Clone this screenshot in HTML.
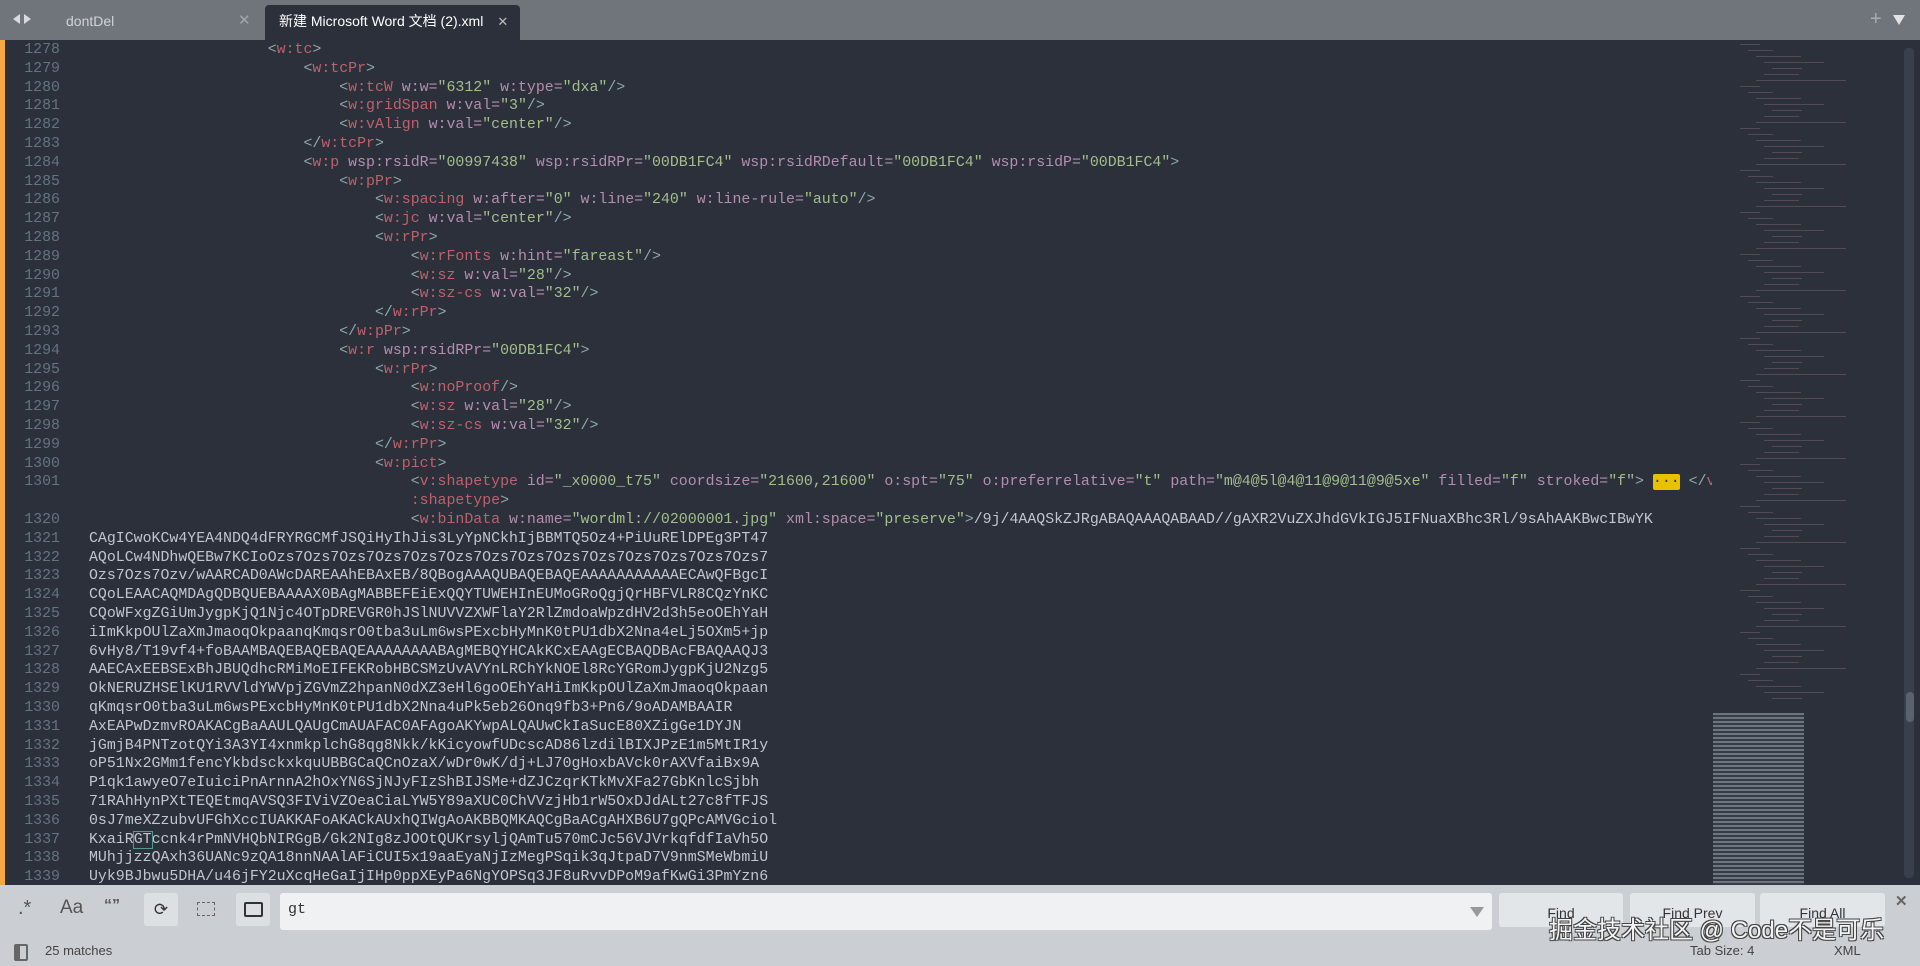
<!DOCTYPE html>
<html><head><meta charset="utf-8"><style>
*{margin:0;padding:0;box-sizing:border-box}
body{width:1920px;height:966px;overflow:hidden;background:#2b303b;font-family:"Liberation Sans","Noto Sans CJK SC",sans-serif;position:relative}
#tabs{position:absolute;left:0;top:0;width:1920px;height:40px;background:#70757b}
.tab{position:absolute;top:5px;height:35px;font-size:14px;line-height:32px}
#code{position:absolute;left:0;top:41px;width:1712px;height:844px;overflow:hidden}
.ln{position:absolute;left:0;width:60px;text-align:right;color:#65737e;font:14.9px/18.8px "Liberation Mono",monospace}
.tx{position:absolute;left:89px;white-space:pre;color:#c0c5ce;font:14.9px/18.8px "Liberation Mono",monospace}
.p{color:#8fa8a8}.t{color:#bf616a}.a{color:#b48ead}.s{color:#a3be8c}
#bar{position:absolute;left:0;top:40px;width:5px;height:845px;background:#f5a742}
#panel{position:absolute;left:0;top:885px;width:1920px;height:81px;background:#cbcfd4}
.btn{position:absolute;top:8px;height:34px;background:#e3e6e9;border-radius:3px;font-size:14px;color:#333;text-align:center;line-height:40px}
.mm{position:absolute;height:1px;background:#8a6a72;opacity:.45}
</style></head><body>
<div id="tabs">
<div style="position:absolute;left:13px;top:14px;width:0;height:0;border-top:5px solid transparent;border-bottom:5px solid transparent;border-right:7px solid #d8dadc"></div>
<div style="position:absolute;left:24px;top:14px;width:0;height:0;border-top:5px solid transparent;border-bottom:5px solid transparent;border-left:7px solid #d8dadc"></div>
<div class="tab" style="left:66px;color:#d0d3d6">dontDel</div>
<div class="tab" style="left:238px;color:#a3a7ab;font-size:15px">✕</div>
<div class="tab" style="left:265px;width:255px;background:#2b303b;border-radius:4px 4px 0 0;color:#fff;padding-left:14px">新建 Microsoft Word 文档 (2).xml<span style="margin-left:14px;color:#bbb;font-size:13px">✕</span></div>
<div style="position:absolute;left:1870px;top:8px;color:#a9adb2;font-size:20px">+</div>
<div style="position:absolute;left:1893px;top:15px;width:0;height:0;border-left:6px solid transparent;border-right:6px solid transparent;border-top:10px solid #e0e2e4"></div>
</div>
<div id="bar"></div>
<div id="code"><div id="lines"></div></div>
<div id="mini"></div>
<div style="position:absolute;left:1713px;top:713px;width:91px;height:172px;background:repeating-linear-gradient(#8b9299 0 2px,#3a404b 2px 4px);opacity:.7"></div>
<div style="position:absolute;left:1904px;top:48px;width:10px;height:830px;background:#39404b;border-radius:4px"></div>
<div style="position:absolute;left:1906px;top:692px;width:8px;height:30px;background:#5a626d;border-radius:4px"></div>
<div id="panel">
<div style="position:absolute;left:18px;top:12px;font-size:20px;color:#555">.*</div>
<div style="position:absolute;left:60px;top:12px;font-size:19px;color:#555">Aa</div>
<div style="position:absolute;left:104px;top:12px;font-size:16px;color:#555;font-weight:bold">“”</div>
<div style="position:absolute;left:144px;top:8px;width:34px;height:33px;background:#dde0e3;border-radius:3px;font-size:17px;color:#333;text-align:center;line-height:33px">⟳</div>
<div style="position:absolute;left:197px;top:17px;width:18px;height:14px;border:1px dashed #666"></div>
<div style="position:absolute;left:236px;top:8px;width:34px;height:33px;background:#dde0e3;border-radius:3px"><div style="position:absolute;left:8px;top:9px;width:19px;height:15px;border:2px solid #333;border-radius:2px"></div></div>
<div style="position:absolute;left:280px;top:8px;width:1212px;height:37px;background:#eff1f3;border-radius:3px;font:15px/34px 'Liberation Mono',monospace;color:#333;padding-left:8px">gt</div>
<div style="position:absolute;left:1470px;top:22px;width:0;height:0;border-left:7px solid transparent;border-right:7px solid transparent;border-top:10px solid #999"></div>
<div class="btn" style="left:1499px;width:124px">Find</div>
<div class="btn" style="left:1630px;width:125px">Find Prev</div>
<div class="btn" style="left:1760px;width:125px">Find All</div>
<div style="position:absolute;left:1895px;top:7px;font-size:15px;color:#666;font-weight:bold">✕</div>
<div style="position:absolute;left:14px;top:59px;width:14px;height:17px;border:2px solid #666;border-left-width:6px;border-radius:2px"></div>
<div style="position:absolute;left:45px;top:58px;font-size:13px;color:#444">25 matches</div>
<div style="position:absolute;left:1690px;top:58px;font-size:13px;color:#444">Tab Size: 4</div>
<div style="position:absolute;left:1834px;top:58px;font-size:13px;color:#444">XML</div>
<div style="position:absolute;left:1549px;top:25px;font-size:24px;color:#f4f4f4;text-shadow:-1px -1px 0 #444,1px 1px 0 #444,1px -1px 0 #444,-1px 1px 0 #444;white-space:nowrap">掘金技术社区 @ Code不是可乐</div>
</div>
<script>
var rows=[
[1278,20,'<span class=p>&lt;</span><span class=t>w:tc</span><span class=p>&gt;</span>'],
[1279,24,'<span class=p>&lt;</span><span class=t>w:tcPr</span><span class=p>&gt;</span>'],
[1280,28,'<span class=p>&lt;</span><span class=t>w:tcW</span> <span class=a>w:w=</span><span class=s>"6312"</span> <span class=a>w:type=</span><span class=s>"dxa"</span><span class=p>/&gt;</span>'],
[1281,28,'<span class=p>&lt;</span><span class=t>w:gridSpan</span> <span class=a>w:val=</span><span class=s>"3"</span><span class=p>/&gt;</span>'],
[1282,28,'<span class=p>&lt;</span><span class=t>w:vAlign</span> <span class=a>w:val=</span><span class=s>"center"</span><span class=p>/&gt;</span>'],
[1283,24,'<span class=p>&lt;/</span><span class=t>w:tcPr</span><span class=p>&gt;</span>'],
[1284,24,'<span class=p>&lt;</span><span class=t>w:p</span> <span class=a>wsp:rsidR=</span><span class=s>"00997438"</span> <span class=a>wsp:rsidRPr=</span><span class=s>"00DB1FC4"</span> <span class=a>wsp:rsidRDefault=</span><span class=s>"00DB1FC4"</span> <span class=a>wsp:rsidP=</span><span class=s>"00DB1FC4"</span><span class=p>&gt;</span>'],
[1285,28,'<span class=p>&lt;</span><span class=t>w:pPr</span><span class=p>&gt;</span>'],
[1286,32,'<span class=p>&lt;</span><span class=t>w:spacing</span> <span class=a>w:after=</span><span class=s>"0"</span> <span class=a>w:line=</span><span class=s>"240"</span> <span class=a>w:line-rule=</span><span class=s>"auto"</span><span class=p>/&gt;</span>'],
[1287,32,'<span class=p>&lt;</span><span class=t>w:jc</span> <span class=a>w:val=</span><span class=s>"center"</span><span class=p>/&gt;</span>'],
[1288,32,'<span class=p>&lt;</span><span class=t>w:rPr</span><span class=p>&gt;</span>'],
[1289,36,'<span class=p>&lt;</span><span class=t>w:rFonts</span> <span class=a>w:hint=</span><span class=s>"fareast"</span><span class=p>/&gt;</span>'],
[1290,36,'<span class=p>&lt;</span><span class=t>w:sz</span> <span class=a>w:val=</span><span class=s>"28"</span><span class=p>/&gt;</span>'],
[1291,36,'<span class=p>&lt;</span><span class=t>w:sz-cs</span> <span class=a>w:val=</span><span class=s>"32"</span><span class=p>/&gt;</span>'],
[1292,32,'<span class=p>&lt;/</span><span class=t>w:rPr</span><span class=p>&gt;</span>'],
[1293,28,'<span class=p>&lt;/</span><span class=t>w:pPr</span><span class=p>&gt;</span>'],
[1294,28,'<span class=p>&lt;</span><span class=t>w:r</span> <span class=a>wsp:rsidRPr=</span><span class=s>"00DB1FC4"</span><span class=p>&gt;</span>'],
[1295,32,'<span class=p>&lt;</span><span class=t>w:rPr</span><span class=p>&gt;</span>'],
[1296,36,'<span class=p>&lt;</span><span class=t>w:noProof</span><span class=p>/&gt;</span>'],
[1297,36,'<span class=p>&lt;</span><span class=t>w:sz</span> <span class=a>w:val=</span><span class=s>"28"</span><span class=p>/&gt;</span>'],
[1298,36,'<span class=p>&lt;</span><span class=t>w:sz-cs</span> <span class=a>w:val=</span><span class=s>"32"</span><span class=p>/&gt;</span>'],
[1299,32,'<span class=p>&lt;/</span><span class=t>w:rPr</span><span class=p>&gt;</span>'],
[1300,32,'<span class=p>&lt;</span><span class=t>w:pict</span><span class=p>&gt;</span>'],
[1301,36,'<span class=p>&lt;</span><span class=t>v:shapetype</span> <span class=a>id=</span><span class=s>"_x0000_t75"</span> <span class=a>coordsize=</span><span class=s>"21600,21600"</span> <span class=a>o:spt=</span><span class=s>"75"</span> <span class=a>o:preferrelative=</span><span class=s>"t"</span> <span class=a>path=</span><span class=s>"m@4@5l@4@11@9@11@9@5xe"</span> <span class=a>filled=</span><span class=s>"f"</span> <span class=a>stroked=</span><span class=s>"f"</span><span class=p>&gt;</span> <span style="background:#e8c100;color:#333;border-radius:2px">···</span> <span class=p>&lt;/</span><span class=t>v</span>'],
['',36,'<span class=t>:shapetype</span><span class=p>&gt;</span>'],
[1320,36,'<span class=p>&lt;</span><span class=t>w:binData</span> <span class=a>w:name=</span><span class=s>"wordml://02000001.jpg"</span> <span class=a>xml:space=</span><span class=s>"preserve"</span><span class=p>&gt;</span>/9j/4AAQSkZJRgABAQAAAQABAAD//gAXR2VuZXJhdGVkIGJ5IFNuaXBhc3Rl/9sAhAAKBwcIBwYK']
];
var b64=["CAgICwoKCw4YEA4NDQ4dFRYRGCMfJSQiHyIhJis3LyYpNCkhIjBBMTQ5Oz4+PiUuRElDPEg3PT47",
"AQoLCw4NDhwQEBw7KCIoOzs7Ozs7Ozs7Ozs7Ozs7Ozs7Ozs7Ozs7Ozs7Ozs7Ozs7Ozs7Ozs7Ozs7",
"Ozs7Ozs7Ozv/wAARCAD0AWcDAREAAhEBAxEB/8QBogAAAQUBAQEBAQEAAAAAAAAAAAECAwQFBgcI",
"CQoLEAACAQMDAgQDBQUEBAAAAX0BAgMABBEFEiExQQYTUWEHInEUMoGRoQgjQrHBFVLR8CQzYnKC",
"CQoWFxgZGiUmJygpKjQ1Njc4OTpDREVGR0hJSlNUVVZXWFlaY2RlZmdoaWpzdHV2d3h5eoOEhYaH",
"iImKkpOUlZaXmJmaoqOkpaanqKmqsrO0tba3uLm6wsPExcbHyMnK0tPU1dbX2Nna4eLj5OXm5+jp",
"6vHy8/T19vf4+foBAAMBAQEBAQEBAQEAAAAAAAABAgMEBQYHCAkKCxEAAgECBAQDBAcFBAQAAQJ3",
"AAECAxEEBSExBhJBUQdhcRMiMoEIFEKRobHBCSMzUvAVYnLRChYkNOEl8RcYGRomJygpKjU2Nzg5",
"OkNERUZHSElKU1RVVldYWVpjZGVmZ2hpanN0dXZ3eHl6goOEhYaHiImKkpOUlZaXmJmaoqOkpaan",
"qKmqsrO0tba3uLm6wsPExcbHyMnK0tPU1dbX2Nna4uPk5eb26Onq9fb3+Pn6/9oADAMBAAIR",
"AxEAPwDzmvROAKACgBaAAULQAUgCmAUAFAC0AFAgoAKYwpALQAUwCkIaSucE80XZigGe1DYJN",
"jGmjB4PNTzotQYi3A3YI4xnmkplchG8qg8Nkk/kKicyowfUDcscAD86lzdilBIXJPzE1m5MtIR1y",
"oP51Nx2GMm1fencYkbdsckxkquUBBGCaQCnOzaX/wDr0wK/dj+LJ70gHoxbAVck0rAXVfaiBx9A",
"P1qk1awyeO7eIuiciPnArnnA2hOxYN6SjNJyFIzShBIJSMe+dZJCzqrKTkMvXFa27GbKnlcSjbh",
"71RAhHynPXtTEQEtmqAVSQ3FIViVZOeaCiaLYW5Y89aXUC0ChVVzjHb1rW5OxDJdALt27c8fTFJS",
"0sJ7meXZzubvUFGhXccIUAKKAFoAKACkAUxhQIWgAoAKBBQMKAQCgBaACgAHXB6U7gQPcAMVGciol",
"KxaiRGTccnk4rPmNVHQbNIRGgB/Gk2NIg8zJOOtQUKrsyljQAmTu570mCJc56VJVrkqfdfIaVh5O",
"MUhjjzzQAxh36UANc9zQA18nnNAAlAFiCUI5x19aaEyaNjIzMegPSqik3qJtpaD7V9nmSMeWbmiU",
"Uyk9BJbwu5DHA/u46jFY2uXcqHeGaIjIHp0ppXEyPa6NgYOPSq3JF8uRvvDPoM9afKwGi3PmYzn6"];
var h='',y=0,ln='',L=18.8;
rows.forEach(function(r){
 ln+='<div class=ln style="top:'+y+'px">'+r[0]+'</div>';
 h+='<div class=tx style="top:'+y+'px">'+' '.repeat(r[1])+r[2]+'</div>';y+=L;});
b64.forEach(function(s,i){
 ln+='<div class=ln style="top:'+y+'px">'+(1321+i)+'</div>';
 if(i==16) s='<span>KxaiR</span><span style="outline:1px solid #4f9a94">GT</span>'+s.slice(7);
 h+='<div class=tx style="top:'+y+'px">'+s+'</div>';y+=L;});
document.getElementById('lines').innerHTML=ln+h;
var m='';
for(var k=0;k<110;k++){var ind=[0,4,8,12,16,12,8][k%7]*2, w=[20,35,60,25,90,30,45][(k*3)%7];
 m+='<div class=mm style="left:'+(1740+ind)+'px;top:'+(44+k*6)+'px;width:'+w+'px"></div>';}
document.getElementById('mini').innerHTML=m;
</script>
</body></html>
